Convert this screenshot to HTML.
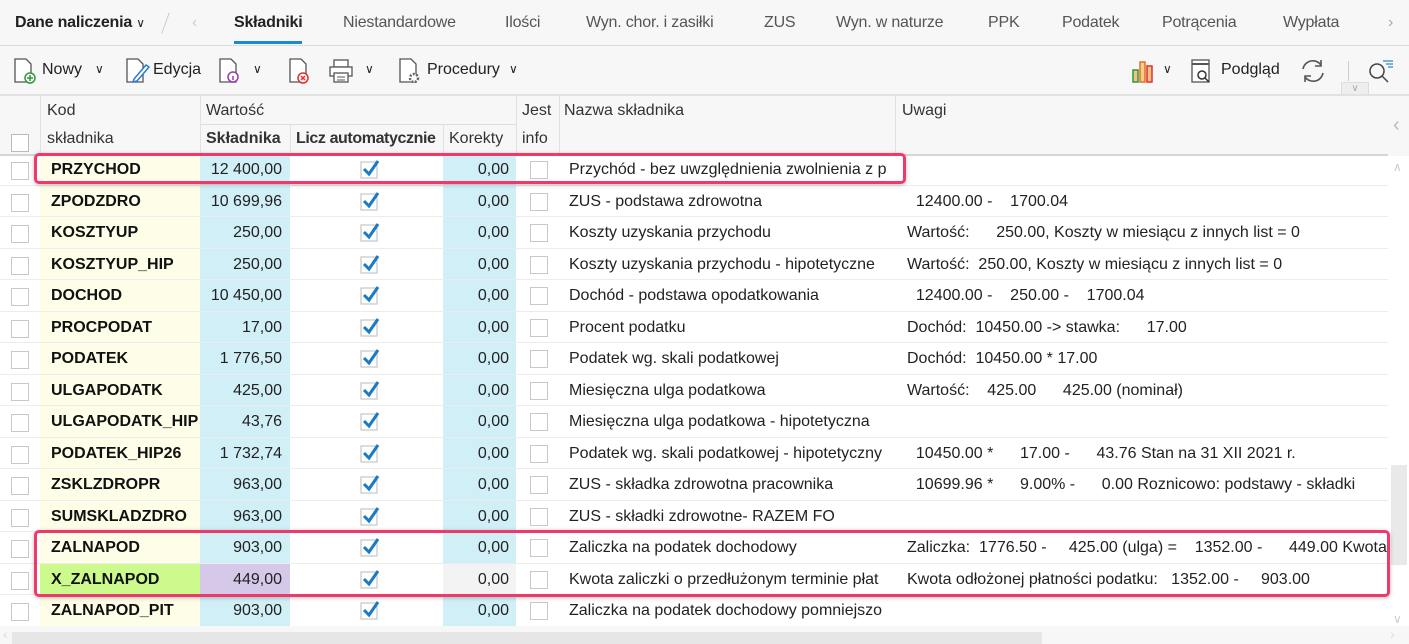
<!DOCTYPE html>
<html><head><meta charset="utf-8"><style>
*{box-sizing:border-box;margin:0;padding:0}
body{width:1409px;height:644px;overflow:hidden;background:#fff;font-family:"Liberation Sans",Arial,sans-serif;font-size:16px;color:#222;position:relative}
.abs{position:absolute}
.tabs{left:0;top:0;width:1409px;height:46px;background:#f7f7f7;border-bottom:1px solid #dcdcdc}
.tab{position:absolute;top:14px;font-size:16px;color:#555;letter-spacing:-.2px}
.tb{left:0;top:46px;width:1409px;height:50px;background:#f7f7f7;border-bottom:2px solid #e2e2e2}
.hd{left:0;top:96px;width:1388px;height:60px;background:#f7f7f7;border-bottom:2px solid #d6d6d6}
.hd span{position:absolute;font-size:16px;color:#333}
.row{position:absolute;left:0;width:1388px;height:31.5px;border-bottom:1px solid #ececec}
.row div{position:absolute;top:0;height:100%;line-height:31px;white-space:nowrap;overflow:hidden}
.cb{left:11px!important;top:8px!important;width:18px;height:18px!important;border:1px solid #c8c8c8;background:#fff}
.c1{left:40px;width:160px;background:#fdfde8;padding-left:11px;font-weight:bold;color:#111}
.c2{left:200px;width:90px;background:#d0eff6;text-align:right;padding-right:8px}
.c3{left:290px;width:153px}
.c4{left:443px;width:73px;background:#d0eff6;text-align:right;padding-right:7px}
.ib{left:530px!important;top:7px!important;width:18px;height:18px!important;border:1px solid #c8c8c8;background:#fff}
.c6{left:569px;width:320px}
.c7{left:907px;width:480px}
.chk{position:absolute;left:360px;top:5px;width:20px;height:22px;overflow:visible}
.hl{position:absolute;border:3px solid #f0386b;border-radius:5px;box-shadow:0 1px 4px rgba(0,0,0,.25)}
</style></head><body>
<div class="abs tabs">
 <div class="tab" style="left:15px;color:#222;font-weight:bold">Dane naliczenia <span style="font-weight:normal;font-size:12px">&#8744;</span></div>
 <div class="abs" style="left:165px;top:12px;width:1px;height:22px;background:#ccc;transform:rotate(20deg)"></div>
 <div class="tab" style="left:192px;color:#ccc">&lsaquo;</div>
 <div class="tab" style="left:234px;color:#222;font-weight:bold">Składniki</div>
 <div class="abs" style="left:234px;top:41px;width:68px;height:3px;background:#1a8ad4"></div>
 <div class="tab" style="left:343px">Niestandardowe</div>
 <div class="tab" style="left:505px">Ilości</div>
 <div class="tab" style="left:586px">Wyn. chor. i zasiłki</div>
 <div class="tab" style="left:764px">ZUS</div>
 <div class="tab" style="left:836px">Wyn. w naturze</div>
 <div class="tab" style="left:988px">PPK</div>
 <div class="tab" style="left:1062px">Podatek</div>
 <div class="tab" style="left:1162px">Potrącenia</div>
 <div class="tab" style="left:1283px">Wypłata</div>
 <div class="tab" style="left:1388px;color:#aaa">&rsaquo;</div>
</div>
<div class="abs tb">
 <svg class="abs" style="left:12px;top:11px" width="28" height="28"><path d="M3 2h11l5 5v18H3z" fill="#fff" stroke="#555" stroke-width="1.3"/><circle cx="18" cy="21" r="5" fill="#fff" stroke="#2a9a3a" stroke-width="1.5"/><path d="M18 18v6M15 21h6" stroke="#2a9a3a" stroke-width="1.5"/></svg>
 <div class="abs" style="left:42px;top:15px">Nowy</div><div class="abs" style="left:95px;top:16px;font-size:12px">&#8744;</div>
 <svg class="abs" style="left:124px;top:11px" width="28" height="28"><path d="M3 2h11l5 5v18H3z" fill="#fff" stroke="#555" stroke-width="1.3"/><path d="M10 22l12-14 3 2-12 14-4 1z" fill="#fff" stroke="#2a7ad0" stroke-width="1.5"/></svg>
 <div class="abs" style="left:153px;top:15px">Edycja</div>
 <svg class="abs" style="left:217px;top:11px" width="28" height="28"><path d="M3 2h11l5 5v18H3z" fill="#fff" stroke="#555" stroke-width="1.3"/><circle cx="16" cy="20" r="5" fill="#fff" stroke="#9b3ab0" stroke-width="1.5"/><path d="M16 19v4" stroke="#9b3ab0" stroke-width="1.5"/></svg>
 <div class="abs" style="left:253px;top:16px;font-size:12px">&#8744;</div>
 <svg class="abs" style="left:287px;top:11px" width="28" height="28"><path d="M3 2h11l5 5v18H3z" fill="#fff" stroke="#555" stroke-width="1.3"/><circle cx="16" cy="21" r="5" fill="#fff" stroke="#e03030" stroke-width="1.5"/><path d="M14 19l4 4M18 19l-4 4" stroke="#e03030" stroke-width="1.5"/></svg>
 <svg class="abs" style="left:328px;top:12px" width="28" height="26"><rect x="6" y="2" width="14" height="7" fill="#fff" stroke="#555" stroke-width="1.3"/><rect x="2" y="9" width="22" height="9" fill="#fff" stroke="#555" stroke-width="1.3"/><rect x="6" y="15" width="14" height="9" fill="#fff" stroke="#555" stroke-width="1.3"/><path d="M9 19h8M9 22h8" stroke="#555"/></svg>
 <div class="abs" style="left:365px;top:16px;font-size:12px">&#8744;</div>
 <svg class="abs" style="left:397px;top:11px" width="28" height="28"><path d="M3 2h11l5 5v18H3z" fill="#fff" stroke="#555" stroke-width="1.3"/><circle cx="17" cy="21" r="4" fill="#fff" stroke="#666" stroke-width="2.5" stroke-dasharray="2 1.5"/></svg>
 <div class="abs" style="left:427px;top:15px">Procedury</div><div class="abs" style="left:509px;top:16px;font-size:12px">&#8744;</div>
 <svg class="abs" style="left:1132px;top:12px" width="30" height="26"><rect x="1" y="12" width="5" height="12" fill="#f5c080" stroke="#2a9a3a" stroke-width="1.5"/><rect x="8" y="4" width="5" height="20" fill="#f5d080" stroke="#e07030" stroke-width="1.5"/><rect x="15" y="8" width="5" height="16" fill="#f5c080" stroke="#e03030" stroke-width="1.5"/></svg>
 <div class="abs" style="left:1163px;top:16px;font-size:12px">&#8744;</div>
 <svg class="abs" style="left:1190px;top:12px" width="28" height="28"><rect x="2" y="2" width="17" height="22" fill="#fff" stroke="#555" stroke-width="1.3"/><path d="M2 6h17" stroke="#555" stroke-width="2"/><circle cx="12" cy="17" r="4" fill="none" stroke="#333" stroke-width="1.5"/><path d="M15 20l4 4" stroke="#333" stroke-width="1.5"/></svg>
 <div class="abs" style="left:1221px;top:15px">Podgląd</div>
 <svg class="abs" style="left:1298px;top:11px" width="30" height="28"><path d="M5 12a10 10 0 0 1 18-4M25 16a10 10 0 0 1-18 4" fill="none" stroke="#555" stroke-width="1.6"/><path d="M23 3v6h-6M7 25v-6h6" fill="none" stroke="#555" stroke-width="1.6"/></svg>
 <div class="abs" style="left:1348px;top:15px;width:1px;height:20px;background:#ccc"></div>
 <svg class="abs" style="left:1366px;top:11px" width="30" height="28"><circle cx="11" cy="14" r="7" fill="none" stroke="#444" stroke-width="1.5"/><path d="M16 19l6 6" stroke="#444" stroke-width="1.5"/><path d="M17 4h10M20 7h7M22 10h5" stroke="#2a8ad4" stroke-width="1.3"/></svg>
 <div class="abs" style="left:1341px;top:36px;width:28px;height:12px;border:1px solid #ddd;border-bottom:none;background:#eee;font-size:10px;color:#aaa;text-align:center;line-height:12px">&#8744;</div>
</div>
<div class="abs hd">
 <span style="left:47px;top:6px">Kod</span><span style="left:47px;top:34px">składnika</span>
 <span style="left:206px;top:6px">Wartość</span>
 <div class="abs" style="left:200px;top:28px;width:316px;height:1px;background:#ddd"></div>
 <div class="abs" style="left:200px;top:0;width:1px;height:60px;background:#e2e2e2"></div>
 <div class="abs" style="left:290px;top:28px;width:1px;height:32px;background:#e2e2e2"></div>
 <div class="abs" style="left:443px;top:28px;width:1px;height:32px;background:#e2e2e2"></div>
 <div class="abs" style="left:516px;top:0;width:1px;height:60px;background:#e2e2e2"></div>
 <div class="abs" style="left:559px;top:0;width:1px;height:60px;background:#e2e2e2"></div>
 <div class="abs" style="left:895px;top:0;width:1px;height:60px;background:#e2e2e2"></div>
 <div class="abs" style="left:40px;top:0;width:1px;height:60px;background:#e2e2e2"></div>
 <span style="left:206px;top:34px;font-weight:bold">Składnika</span>
 <span style="left:296px;top:34px;font-weight:bold;letter-spacing:-.4px">Licz automatycznie</span>
 <span style="left:449px;top:34px">Korekty</span>
 <span style="left:522px;top:6px">Jest</span><span style="left:522px;top:34px">info</span>
 <span style="left:564px;top:6px">Nazwa składnika</span>
 <span style="left:902px;top:6px">Uwagi</span>
 <div class="abs" style="left:11px;top:38px;width:18px;height:18px;border:1px solid #bbb;background:#fff"></div>
</div>
<div class="abs" style="left:1388px;top:96px;width:21px;height:60px;background:#f7f7f7;color:#bbb;font-size:20px;padding:18px 0 0 5px">&lsaquo;</div>
<div class="abs" style="left:1388px;top:156px;width:21px;height:474px;background:#fff"></div>
<div class="abs" style="left:1393px;top:160px;color:#ccc;font-size:12px">&#8743;</div>
<div class="abs" style="left:1391px;top:465px;width:16px;height:100px;background:#e9e9e9"></div>
<div class="abs" style="left:1393px;top:612px;color:#ccc;font-size:12px">&#8744;</div>

<div id="rows">
<div class="row" style="top:154px"><div class="cb"></div><div class="c1">PRZYCHOD</div><div class="c2">12 400,00</div><div class="c3"></div><svg class="chk"><rect x="1" y="3" width="16" height="16" fill="#fff" stroke="#bbb"/><path d="M4 10l5 5 9-13" fill="none" stroke="#1a7ac4" stroke-width="3"/></svg><div class="c4">0,00</div><div class="ib"></div><div class="c6">Przychód - bez uwzględnienia zwolnienia z p</div><div class="c7"></div></div>
<div class="row" style="top:185.5px"><div class="cb"></div><div class="c1">ZPODZDRO</div><div class="c2">10 699,96</div><svg class="chk"><rect x="1" y="3" width="16" height="16" fill="#fff" stroke="#bbb"/><path d="M4 10l5 5 9-13" fill="none" stroke="#1a7ac4" stroke-width="3"/></svg><div class="c4">0,00</div><div class="ib"></div><div class="c6">ZUS - podstawa zdrowotna</div><div class="c7">&nbsp;&nbsp;12400.00 -&nbsp;&nbsp;&nbsp;&nbsp;1700.04</div></div>
<div class="row" style="top:217px"><div class="cb"></div><div class="c1">KOSZTYUP</div><div class="c2">250,00</div><svg class="chk"><rect x="1" y="3" width="16" height="16" fill="#fff" stroke="#bbb"/><path d="M4 10l5 5 9-13" fill="none" stroke="#1a7ac4" stroke-width="3"/></svg><div class="c4">0,00</div><div class="ib"></div><div class="c6">Koszty uzyskania przychodu</div><div class="c7">Wartość:&nbsp;&nbsp;&nbsp;&nbsp;&nbsp;&nbsp;250.00, Koszty w miesiącu z innych list = 0</div></div>
<div class="row" style="top:248.5px"><div class="cb"></div><div class="c1">KOSZTYUP_HIP</div><div class="c2">250,00</div><svg class="chk"><rect x="1" y="3" width="16" height="16" fill="#fff" stroke="#bbb"/><path d="M4 10l5 5 9-13" fill="none" stroke="#1a7ac4" stroke-width="3"/></svg><div class="c4">0,00</div><div class="ib"></div><div class="c6">Koszty uzyskania przychodu - hipotetyczne</div><div class="c7">Wartość:&nbsp;&nbsp;250.00, Koszty w miesiącu z innych list = 0</div></div>
<div class="row" style="top:280px"><div class="cb"></div><div class="c1">DOCHOD</div><div class="c2">10 450,00</div><svg class="chk"><rect x="1" y="3" width="16" height="16" fill="#fff" stroke="#bbb"/><path d="M4 10l5 5 9-13" fill="none" stroke="#1a7ac4" stroke-width="3"/></svg><div class="c4">0,00</div><div class="ib"></div><div class="c6">Dochód - podstawa opodatkowania</div><div class="c7">&nbsp;&nbsp;12400.00 -&nbsp;&nbsp;&nbsp;&nbsp;250.00 -&nbsp;&nbsp;&nbsp;&nbsp;1700.04</div></div>
<div class="row" style="top:311.5px"><div class="cb"></div><div class="c1">PROCPODAT</div><div class="c2">17,00</div><svg class="chk"><rect x="1" y="3" width="16" height="16" fill="#fff" stroke="#bbb"/><path d="M4 10l5 5 9-13" fill="none" stroke="#1a7ac4" stroke-width="3"/></svg><div class="c4">0,00</div><div class="ib"></div><div class="c6">Procent podatku</div><div class="c7">Dochód:&nbsp;&nbsp;10450.00 -&gt; stawka:&nbsp;&nbsp;&nbsp;&nbsp;&nbsp;&nbsp;17.00</div></div>
<div class="row" style="top:343px"><div class="cb"></div><div class="c1">PODATEK</div><div class="c2">1 776,50</div><svg class="chk"><rect x="1" y="3" width="16" height="16" fill="#fff" stroke="#bbb"/><path d="M4 10l5 5 9-13" fill="none" stroke="#1a7ac4" stroke-width="3"/></svg><div class="c4">0,00</div><div class="ib"></div><div class="c6">Podatek wg. skali podatkowej</div><div class="c7">Dochód:&nbsp;&nbsp;10450.00 * 17.00</div></div>
<div class="row" style="top:374.5px"><div class="cb"></div><div class="c1">ULGAPODATK</div><div class="c2">425,00</div><svg class="chk"><rect x="1" y="3" width="16" height="16" fill="#fff" stroke="#bbb"/><path d="M4 10l5 5 9-13" fill="none" stroke="#1a7ac4" stroke-width="3"/></svg><div class="c4">0,00</div><div class="ib"></div><div class="c6">Miesięczna ulga podatkowa</div><div class="c7">Wartość:&nbsp;&nbsp;&nbsp;&nbsp;425.00&nbsp;&nbsp;&nbsp;&nbsp;&nbsp;&nbsp;425.00 (nominał)</div></div>
<div class="row" style="top:406px"><div class="cb"></div><div class="c1">ULGAPODATK_HIP</div><div class="c2">43,76</div><svg class="chk"><rect x="1" y="3" width="16" height="16" fill="#fff" stroke="#bbb"/><path d="M4 10l5 5 9-13" fill="none" stroke="#1a7ac4" stroke-width="3"/></svg><div class="c4">0,00</div><div class="ib"></div><div class="c6">Miesięczna ulga podatkowa - hipotetyczna</div><div class="c7"></div></div>
<div class="row" style="top:437.5px"><div class="cb"></div><div class="c1">PODATEK_HIP26</div><div class="c2">1 732,74</div><svg class="chk"><rect x="1" y="3" width="16" height="16" fill="#fff" stroke="#bbb"/><path d="M4 10l5 5 9-13" fill="none" stroke="#1a7ac4" stroke-width="3"/></svg><div class="c4">0,00</div><div class="ib"></div><div class="c6">Podatek wg. skali podatkowej - hipotetyczny</div><div class="c7">&nbsp;&nbsp;10450.00 *&nbsp;&nbsp;&nbsp;&nbsp;&nbsp;&nbsp;17.00 -&nbsp;&nbsp;&nbsp;&nbsp;&nbsp;&nbsp;43.76 Stan na 31 XII 2021 r.</div></div>
<div class="row" style="top:469px"><div class="cb"></div><div class="c1">ZSKLZDROPR</div><div class="c2">963,00</div><svg class="chk"><rect x="1" y="3" width="16" height="16" fill="#fff" stroke="#bbb"/><path d="M4 10l5 5 9-13" fill="none" stroke="#1a7ac4" stroke-width="3"/></svg><div class="c4">0,00</div><div class="ib"></div><div class="c6">ZUS - składka zdrowotna pracownika</div><div class="c7">&nbsp;&nbsp;10699.96 *&nbsp;&nbsp;&nbsp;&nbsp;&nbsp;&nbsp;9.00% -&nbsp;&nbsp;&nbsp;&nbsp;&nbsp;&nbsp;0.00 Roznicowo: podstawy - składki</div></div>
<div class="row" style="top:500.5px"><div class="cb"></div><div class="c1">SUMSKLADZDRO</div><div class="c2">963,00</div><svg class="chk"><rect x="1" y="3" width="16" height="16" fill="#fff" stroke="#bbb"/><path d="M4 10l5 5 9-13" fill="none" stroke="#1a7ac4" stroke-width="3"/></svg><div class="c4">0,00</div><div class="ib"></div><div class="c6">ZUS - składki zdrowotne- RAZEM FO</div><div class="c7"></div></div>
<div class="row" style="top:532px"><div class="cb"></div><div class="c1">ZALNAPOD</div><div class="c2">903,00</div><svg class="chk"><rect x="1" y="3" width="16" height="16" fill="#fff" stroke="#bbb"/><path d="M4 10l5 5 9-13" fill="none" stroke="#1a7ac4" stroke-width="3"/></svg><div class="c4">0,00</div><div class="ib"></div><div class="c6">Zaliczka na podatek dochodowy</div><div class="c7">Zaliczka:&nbsp;&nbsp;1776.50 -&nbsp;&nbsp;&nbsp;&nbsp;&nbsp;425.00 (ulga) =&nbsp;&nbsp;&nbsp;&nbsp;1352.00 -&nbsp;&nbsp;&nbsp;&nbsp;&nbsp;&nbsp;449.00 Kwota</div></div>
<div class="row" style="top:563.5px"><div class="cb"></div><div class="c1" style="background:#ccfa8c">X_ZALNAPOD</div><div class="c2" style="background:#d5c8e8">449,00</div><svg class="chk"><rect x="1" y="3" width="16" height="16" fill="#fff" stroke="#bbb"/><path d="M4 10l5 5 9-13" fill="none" stroke="#1a7ac4" stroke-width="3"/></svg><div class="c4" style="background:#f3f3f3">0,00</div><div class="ib"></div><div class="c6">Kwota zaliczki o przedłużonym terminie płat</div><div class="c7">Kwota odłożonej płatności podatku:&nbsp;&nbsp;&nbsp;1352.00 -&nbsp;&nbsp;&nbsp;&nbsp;&nbsp;903.00</div></div>
<div class="row" style="top:595px"><div class="cb"></div><div class="c1">ZALNAPOD_PIT</div><div class="c2">903,00</div><svg class="chk"><rect x="1" y="3" width="16" height="16" fill="#fff" stroke="#bbb"/><path d="M4 10l5 5 9-13" fill="none" stroke="#1a7ac4" stroke-width="3"/></svg><div class="c4">0,00</div><div class="ib"></div><div class="c6">Zaliczka na podatek dochodowy pomniejszo</div><div class="c7"></div></div>
</div>
<div class="abs" style="left:0;top:626px;width:1409px;height:18px;background:#f7f7f7"></div>
<div class="abs" style="left:12px;top:632px;width:1030px;height:12px;background:#e6e6e6"></div>
<div class="abs" style="left:3px;top:626px;color:#ddd;font-size:14px">&lsaquo;</div>
<div class="abs" style="left:1390px;top:626px;color:#ddd;font-size:14px">&rsaquo;</div>
<div class="hl" style="left:34px;top:153px;width:872px;height:31px"></div>
<div class="hl" style="left:34px;top:530px;width:1356px;height:67px"></div>
</body></html>
